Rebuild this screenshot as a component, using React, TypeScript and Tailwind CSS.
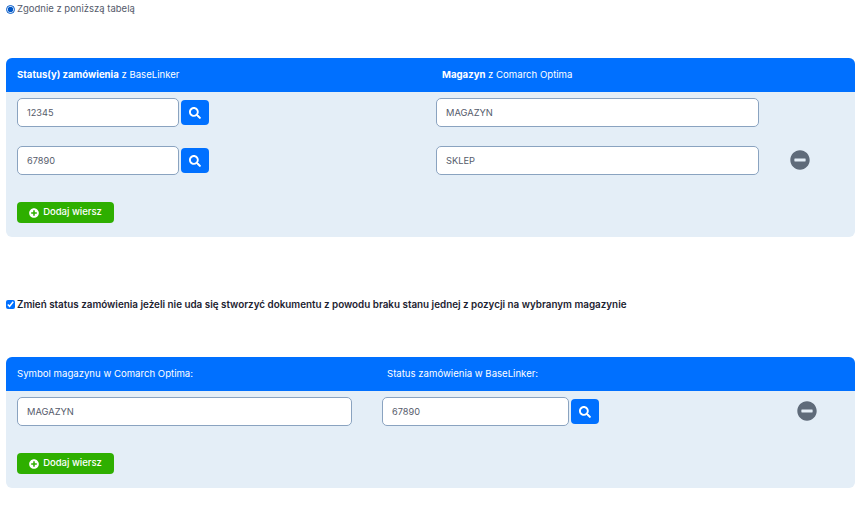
import { FaSearch, FaPlusCircle, FaMinusCircle } from "react-icons/fa";

const font = "font-['Inter','Liberation_Sans',sans-serif]";

function TextBox({ value, className = "" }: { value: string; className?: string }) {
  return (
    <div className={`h-[29px] flex items-center pl-[9px] bg-white border border-[#8aa3c0] rounded-[5px] text-[#555b6b] ${className}`}>
      {value}
    </div>
  );
}

function SearchButton() {
  return (
    <button className="ml-[2px] w-[28px] h-[25px] flex items-center justify-center bg-[#0070ff] rounded-[4px] text-white">
      <FaSearch className="w-[12px] h-[12px]" />
    </button>
  );
}

function AddButton() {
  return (
    <button className="w-[97px] h-[21px] flex items-center justify-center gap-[4px] bg-[#2eaf00] rounded-[4px] text-white text-[9.5px] font-medium">
      <FaPlusCircle className="w-[10px] h-[10px]" />
      Dodaj wiersz
    </button>
  );
}

const letters = "text-[9.3px]";
const digits = "text-[9.2px]";

export default function App() {
  return (
    <div className={`${font} w-[863px] h-[511px] overflow-hidden bg-white text-[9.6px] text-[#555b6b]`}>
      <label className="flex items-center gap-[2px] pl-[6px] pt-[3px] h-[15px]">
        <input type="radio" defaultChecked className="w-[9px] h-[9px] m-0 accent-[#0070ff]" />
        <span className="text-[9.5px] mt-[1px]">Zgodnie z poniższą tabelą</span>
      </label>

      <section className="mt-[43px] ml-[6px] w-[849px] h-[179px] bg-[#e4eef7] rounded-[6px] overflow-hidden">
        <div className="h-[34px] flex items-center bg-[#0070ff] text-white pl-[11px]">
          <div className="w-[425px]"><b className="font-bold">Status(y) zamówienia</b> z BaseLinker</div>
          <div><b className="font-bold">Magazyn</b> z Comarch Optima</div>
        </div>
        <div className="flex items-center pl-[11px] mt-[6px]">
          <TextBox value="12345" className={`w-[162px] ${digits}`} />
          <SearchButton />
          <TextBox value="MAGAZYN" className={`w-[323px] ml-[227px] ${letters}`} />
        </div>
        <div className="flex items-center pl-[11px] mt-[19px]">
          <TextBox value="67890" className={`w-[162px] ${digits}`} />
          <SearchButton />
          <TextBox value="SKLEP" className={`w-[323px] ml-[227px] ${letters}`} />
          <FaMinusCircle className="ml-[31px] mb-[2px] w-[20px] h-[20px] text-[#5f6b7a]" />
        </div>
        <div className="pl-[11px] mt-[27px]">
          <AddButton />
        </div>
      </section>

      <label className="flex items-center gap-[2px] pl-[6px] mt-[61px] h-[12px] font-semibold text-[#1c2230]">
        <input type="checkbox" defaultChecked className="w-[9px] h-[9px] m-0 accent-[#0070ff]" />
        <span className="text-[9.85px]">Zmień status zamówienia jeżeli nie uda się stworzyć dokumentu z powodu braku stanu jednej z pozycji na wybranym magazynie</span>
      </label>

      <section className="mt-[47px] ml-[6px] w-[849px] h-[131px] bg-[#e4eef7] rounded-[6px] overflow-hidden">
        <div className="h-[34px] flex items-center bg-[#0070ff] text-white pl-[11px]">
          <div className="w-[370px]">Symbol magazynu w Comarch Optima:</div>
          <div>Status zamówienia w BaseLinker:</div>
        </div>
        <div className="flex items-center pl-[11px] mt-[6px]">
          <TextBox value="MAGAZYN" className={`w-[335px] ${letters}`} />
          <TextBox value="67890" className={`w-[187px] ml-[30px] ${digits}`} />
          <SearchButton />
          <FaMinusCircle className="ml-[198px] mb-[1px] w-[20px] h-[20px] text-[#5f6b7a]" />
        </div>
        <div className="pl-[11px] mt-[27px]">
          <AddButton />
        </div>
      </section>
    </div>
  );
}
